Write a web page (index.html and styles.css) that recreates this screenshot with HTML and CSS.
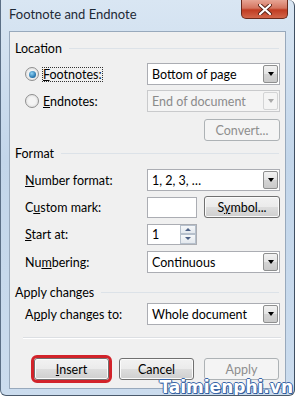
FILE: index.html
```html
<!DOCTYPE html>
<html lang="en">

<head>
    <meta charset="UTF-8">
    <title>Footnote and Endnote</title>
    <link rel="stylesheet" href="styles.css">
</head>

<body>
    <div class="window">
        <!-- title bar -->
        <div class="titlebar">
            <span class="title">Footnote and Endnote</span>
            <div class="close-btn">
                <svg width="14" height="11" viewBox="0 0 14 11">
                    <path d="M2 1 L12 10 M12 1 L2 10" stroke="#5b2418" stroke-width="4" stroke-linecap="round" />
                    <path d="M2 1 L12 10 M12 1 L2 10" stroke="#fff" stroke-width="2.2" stroke-linecap="round" />
                </svg>
            </div>
        </div>

        <div class="client">
            <!-- Location -->
            <div class="group-title g-location">Location</div>
            <div class="row r-foot">
                <div class="radio-label">
                    <span class="radio checked"></span>
                    <span class="focus"><u>F</u>ootnotes:</span>
                </div>
                <div class="select">
                    <span class="value">Bottom of page</span>
                    <span class="arrow"><i></i></span>
                </div>
            </div>
            <div class="row r-end">
                <div class="radio-label">
                    <span class="radio"></span>
                    <span><u>E</u>ndnotes:</span>
                </div>
                <div class="select disabled">
                    <span class="value">End of document</span>
                    <span class="arrow"><i></i></span>
                </div>
            </div>
            <div class="row r-convert">
                <div></div>
                <div class="right">
                    <button class="btn disabled">Convert...</button>
                </div>
            </div>

            <!-- Format -->
            <div class="group-title g-format">Format</div>
            <div class="row r-numfmt">
                <span><u>N</u>umber format:</span>
                <div class="select">
                    <span class="value">1, 2, 3, …</span>
                    <span class="arrow"><i></i></span>
                </div>
            </div>
            <div class="row r-custom">
                <span>C<u>u</u>stom mark:</span>
                <div class="pair">
                    <div class="textbox"></div>
                    <button class="btn">S<u>y</u>mbol...</button>
                </div>
            </div>
            <div class="row r-start">
                <span><u>S</u>tart at:</span>
                <div class="spinner">
                    <span class="value">1</span>
                    <div class="spin">
                        <span class="up"><i></i></span>
                        <span class="down"><i></i></span>
                    </div>
                </div>
            </div>
            <div class="row r-numbering">
                <span>Nu<u>m</u>bering:</span>
                <div class="select">
                    <span class="value">Continuous</span>
                    <span class="arrow"><i></i></span>
                </div>
            </div>

            <!-- Apply changes -->
            <div class="group-title g-apply">Apply changes</div>
            <div class="row r-applyto">
                <span>A<u>p</u>ply changes to:</span>
                <div class="select">
                    <span class="value">Whole document</span>
                    <span class="arrow"><i></i></span>
                </div>
            </div>

            <div class="separator"></div>

            <div class="buttons">
                <button class="btn highlight"><u>I</u>nsert</button>
                <button class="btn">Cancel</button>
                <button class="btn disabled">Apply</button>
            </div>
        </div>

        <div class="watermark">Taimienphi.vn</div>
    </div>
</body>

</html>
```

FILE: styles.css
```css
body {
    margin: 0;
    font-family: Lato, 'Open Sans', sans-serif;
    font-size: 12.5px;
    color: #000;
    background-color: #fff;
}

.window {
    position: relative;
    width: 295px;
    height: 396px;
    box-sizing: border-box;
    padding: 0 8px 7px 8px;
    background: linear-gradient(to bottom, #d9e6f3, #c3d6ea 40%, #cbdcee);
    border-left: 1px solid #5b6f86;
    border-right: 1px solid #3f4f62;
    border-bottom: 1px solid #4a5a6c;
    border-radius: 0 6px 6px 6px;
    overflow: hidden;
}

.titlebar {
    height: 31px;
    display: flex;
    justify-content: space-between;
    align-items: flex-start;
}

.title {
    margin-top: 6px;
    font-size: 13px;
    color: #1e2a36;
}

.close-btn {
    width: 47px;
    height: 19px;
    margin-right: -2px;
    box-sizing: border-box;
    border: 1px solid #6a2a1c;
    border-top: none;
    border-radius: 0 0 5px 5px;
    background: linear-gradient(to bottom, #e7a595 0%, #d47560 45%, #c03c22 55%, #d2664a 100%);
    display: flex;
    justify-content: center;
    align-items: center;
}

.client {
    height: 358px;
    box-sizing: border-box;
    background-color: #f0f0f0;
    border: 1px solid #98a9bc;
    display: flex;
    flex-direction: column;
}

/* group headings with a line after the text */
.group-title {
    height: 16px;
    padding-left: 5px;
    display: flex;
    align-items: center;
    gap: 7px;
}

.group-title::after {
    content: "";
    flex: 1;
    margin-right: 6px;
    border-top: 1px solid #dce2e8;
}

.g-location { margin-top: 8px; }
.g-format { margin-top: 4px; }
.g-apply { margin-top: 11px; }

.row {
    display: grid;
    grid-template-columns: 122px 133px;
    align-items: center;
    height: 22px;
    padding-left: 15px;
}

.r-foot { margin-top: 7px; }
.r-end { margin-top: 5px; }
.r-convert { margin-top: 7px; }
.r-numfmt { margin-top: 8px; }
.r-custom { margin-top: 5px; }
.r-start { margin-top: 5px; }
.r-numbering { margin-top: 6px; }
.r-applyto { margin-top: 3px; }

.radio-label {
    display: flex;
    align-items: center;
    gap: 4px;
}

.radio {
    width: 12px;
    height: 12px;
    border-radius: 50%;
    border: 1px solid #8f8f8f;
    background: radial-gradient(circle, #f4f4f4 40%, #d6d6d6 100%);
    display: flex;
    justify-content: center;
    align-items: center;
}

.radio.checked::after {
    content: "";
    width: 7px;
    height: 7px;
    border-radius: 50%;
    background: radial-gradient(circle at 40% 35%, #8fd3f5, #1f6fa8 70%, #174f7c);
}

.focus {
    outline: 1px dotted #333;
    outline-offset: 0;
    line-height: 13px;
}

.select {
    height: 22px;
    box-sizing: border-box;
    border: 1px solid #abadb3;
    background-color: #fff;
    display: flex;
    align-items: center;
}

.select .value {
    flex: 1;
    padding-left: 4px;
}

.select .arrow {
    width: 15px;
    height: 18px;
    margin-right: 1px;
    box-sizing: border-box;
    border: 1px solid #8e8f8f;
    border-radius: 2px;
    background: linear-gradient(to bottom, #f2f2f2, #e4e4e4 50%, #d4d4d4 51%, #cacaca);
    display: flex;
    justify-content: center;
    align-items: center;
}

.arrow i {
    width: 0;
    height: 0;
    border-left: 3.5px solid transparent;
    border-right: 3.5px solid transparent;
    border-top: 4px solid #000;
}

.select.disabled {
    border-color: #c9cacc;
    background-color: #f4f4f4;
    color: #8b8b8b;
}

.select.disabled .arrow {
    border-color: #d3d4d5;
    background: #f4f4f4;
}

.select.disabled .arrow i {
    border-top-color: #a9a9a9;
}

.right {
    display: flex;
    justify-content: flex-end;
}

.btn {
    width: 76px;
    height: 22px;
    padding: 0;
    font-family: inherit;
    font-size: 12.5px;
    color: #000;
    border: 1px solid #707070;
    border-radius: 3px;
    background: linear-gradient(to bottom, #f2f2f2, #ebebeb 50%, #dddddd 51%, #cfcfcf);
    box-shadow: inset 0 0 0 1px #fbfbfb;
}

.btn.disabled {
    color: #8e8e8e;
    border-color: #adb2b5;
    background: #f4f4f4;
    box-shadow: none;
}

.pair {
    display: flex;
    align-items: center;
    gap: 7px;
}

.textbox {
    width: 50px;
    height: 21px;
    box-sizing: border-box;
    border: 1px solid #abadb3;
    background-color: #fff;
}

.spinner {
    width: 50px;
    height: 21px;
    box-sizing: border-box;
    border: 1px solid #abadb3;
    background-color: #fff;
    display: flex;
    align-items: center;
}

.spinner .value {
    flex: 1;
    padding-left: 4px;
}

.spin {
    width: 16px;
    height: 19px;
    display: flex;
    flex-direction: column;
}

.spin span {
    flex: 1;
    border: 1px solid #b6c0cc;
    background: linear-gradient(to bottom, #f6f8fa, #e3e8ee);
    display: flex;
    justify-content: center;
    align-items: center;
}

.spin .up i {
    border-left: 3px solid transparent;
    border-right: 3px solid transparent;
    border-bottom: 3px solid #4d6185;
}

.spin .down i {
    border-left: 3px solid transparent;
    border-right: 3px solid transparent;
    border-top: 3px solid #4d6185;
}

.separator {
    margin: 12px 4px 0 13px;
    border-top: 1px solid #dcdfe3;
    border-bottom: 1px solid #fff;
}

.buttons {
    margin-top: 19px;
    padding-left: 24px;
    display: flex;
    gap: 10px;
}

.buttons .btn {
    width: 75px;
}

/* red box drawn around the Insert button */
.btn.highlight {
    outline: 3px solid #d2232a;
    outline-offset: 0;
}

.watermark {
    position: absolute;
    right: 1px;
    bottom: -2px;
    font-family: 'DejaVu Sans', sans-serif;
    font-size: 17px;
    line-height: 20px;
    font-weight: bold;
    color: #fff;
    text-shadow: 1px 0 #3a66a8, -1px 0 #3a66a8, 0 1px #3a66a8, 0 -1px #3a66a8, 1px 1px #2b4f86;
}
```
